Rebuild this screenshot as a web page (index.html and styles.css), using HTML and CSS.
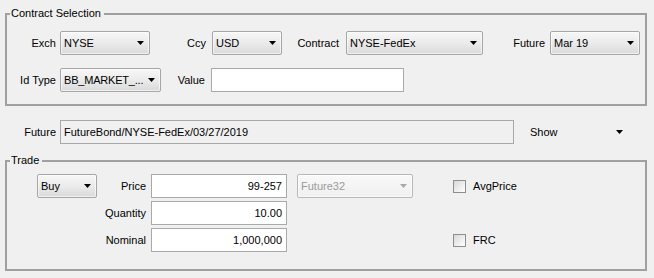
FILE: index.html
```html
<!DOCTYPE html>
<html lang="en">
<head>
    <meta charset="UTF-8">
    <title>Contract Selection</title>
    <link rel="stylesheet" href="styles.css">
</head>
<body>
    <div class="panel">

        <fieldset class="group contract">
            <legend>Contract Selection</legend>
            <div class="row">
                <span class="lbl lbl-first">Exch</span>
                <div class="combo w-exch"><span>NYSE</span><svg width="7" height="4"><polygon points="0,0 7,0 3.5,4" /></svg></div>
                <span class="lbl lbl-ccy">Ccy</span>
                <div class="combo w-ccy"><span>USD</span><svg width="7" height="4"><polygon points="0,0 7,0 3.5,4" /></svg></div>
                <span class="lbl lbl-contract">Contract</span>
                <div class="combo w-contract"><span>NYSE-FedEx</span><svg width="7" height="4"><polygon points="0,0 7,0 3.5,4" /></svg></div>
                <span class="lbl lbl-future">Future</span>
                <div class="combo w-future"><span>Mar 19</span><svg width="7" height="4"><polygon points="0,0 7,0 3.5,4" /></svg></div>
            </div>
            <div class="row row-second">
                <span class="lbl lbl-first">Id Type</span>
                <div class="combo w-idtype"><span>BB_MARKET_...</span><svg width="7" height="4"><polygon points="0,0 7,0 3.5,4" /></svg></div>
                <span class="lbl lbl-value">Value</span>
                <div class="text w-value"></div>
            </div>
        </fieldset>

        <div class="future-row">
            <span class="lbl lbl-future-row">Future</span>
            <div class="text readonly w-bond">FutureBond/NYSE-FedEx/03/27/2019</div>
            <div class="show"><span>Show</span><svg width="7" height="4"><polygon points="0,0 7,0 3.5,4" /></svg></div>
        </div>

        <fieldset class="group trade">
            <legend>Trade</legend>
            <div class="trade-grid">
                <div class="combo w-side"><span>Buy</span><svg width="7" height="4"><polygon points="0,0 7,0 3.5,4" /></svg></div>
                <span class="lbl lbl-trade">Price</span>
                <div class="text num">99-257</div>
                <div class="combo-cell"><div class="combo disabled"><span>Future32</span><svg width="7" height="4"><polygon points="0,0 7,0 3.5,4" /></svg></div></div>
                <label class="check"><span class="box"></span>AvgPrice</label>

                <span></span>
                <span class="lbl lbl-trade">Quantity</span>
                <div class="text num">10.00</div>
                <span></span>
                <span></span>

                <span></span>
                <span class="lbl lbl-trade">Nominal</span>
                <div class="text num">1,000,000</div>
                <span></span>
                <label class="check"><span class="box"></span>FRC</label>
            </div>
        </fieldset>

    </div>
</body>
</html>
```

FILE: styles.css
```css
html, body {
    margin: 0;
    padding: 0;
    background-color: #f0f0f0;
}
body {
    font-family: "Liberation Sans", Arial, sans-serif;
    font-size: 11px;
    color: #000000;
}
.panel {
    padding: 7px 7px 0 5px;
}
.group {
    margin: 0;
    padding: 0;
    border: 2px solid #a0a0a0;
    min-width: 0;
}
.group legend {
    margin-left: 3px;
    padding: 0 3px 0 1px;
    line-height: 13px;
}
.contract {
    padding: 11px 0 12px 0;
}
.row {
    display: flex;
    align-items: center;
    height: 24px;
}
.row-second {
    margin-top: 13px;
}
.lbl {
    box-sizing: border-box;
    text-align: right;
    white-space: nowrap;
}
.lbl-first {
    width: 53px;
    padding-right: 4px;
}
.lbl-ccy {
    width: 62px;
    padding-right: 6px;
}
.lbl-contract {
    width: 64px;
    padding-right: 7px;
}
.lbl-future {
    width: 67px;
    padding-right: 5px;
}
.lbl-value {
    width: 50px;
    padding-right: 6px;
}
.combo {
    box-sizing: border-box;
    height: 24px;
    display: flex;
    align-items: center;
    justify-content: space-between;
    padding: 0 5px 0 3px;
    border: 1px solid #a6a6a6;
    border-radius: 2px;
    background: linear-gradient(#f7f7f7, #ebebeb 50%, #dadada);
    box-shadow: inset 0 0 0 1px rgba(255, 255, 255, 0.6);
    white-space: nowrap;
}
.combo svg {
    flex: none;
    fill: #000000;
}
.combo.disabled {
    color: #9a9a9a;
    background: linear-gradient(#f9f9f9, #f0f0f0);
    border-color: #b8b8b8;
}
.combo.disabled svg {
    fill: #a8a8a8;
}
.w-exch { width: 90px; }
.w-ccy { width: 70px; }
.w-contract { width: 137px; }
.w-future { width: 90px; }
.w-idtype { width: 101px; letter-spacing: -0.2px; }
.w-side { width: 60px; }
.text {
    box-sizing: border-box;
    height: 24px;
    line-height: 22px;
    padding: 0 4px 0 3px;
    border: 1px solid #a9a9a9;
    background-color: #ffffff;
    white-space: nowrap;
}
.text.readonly {
    background-color: #f0f0f0;
}
.text.num {
    text-align: right;
}
.w-value { width: 193px; }
.future-row {
    display: flex;
    align-items: center;
    height: 24px;
    margin-top: 14px;
}
.lbl-future-row {
    width: 55px;
    padding-right: 4px;
}
.w-bond { width: 454px; }
.show {
    width: 93px;
    margin-left: 16px;
    display: flex;
    align-items: center;
    justify-content: space-between;
}
.show svg {
    fill: #000000;
}
.trade {
    margin-top: 10px;
    padding: 7px 0 17px 0;
}
.trade-grid {
    display: grid;
    grid-template-columns: 60px 54px 136px 126px auto;
    grid-template-rows: 24px 24px 24px;
    row-gap: 3px;
    align-items: center;
    padding-left: 30px;
}
.lbl-trade {
    padding-right: 5px;
}
.combo-cell {
    padding-left: 10px;
}
.check {
    display: flex;
    align-items: center;
    margin-left: 40px;
}
.check .box {
    box-sizing: border-box;
    width: 13px;
    height: 13px;
    margin-right: 7px;
    border: 1px solid #8e8e8e;
    background: linear-gradient(135deg, #d8d8d8, #ffffff);
}
```
